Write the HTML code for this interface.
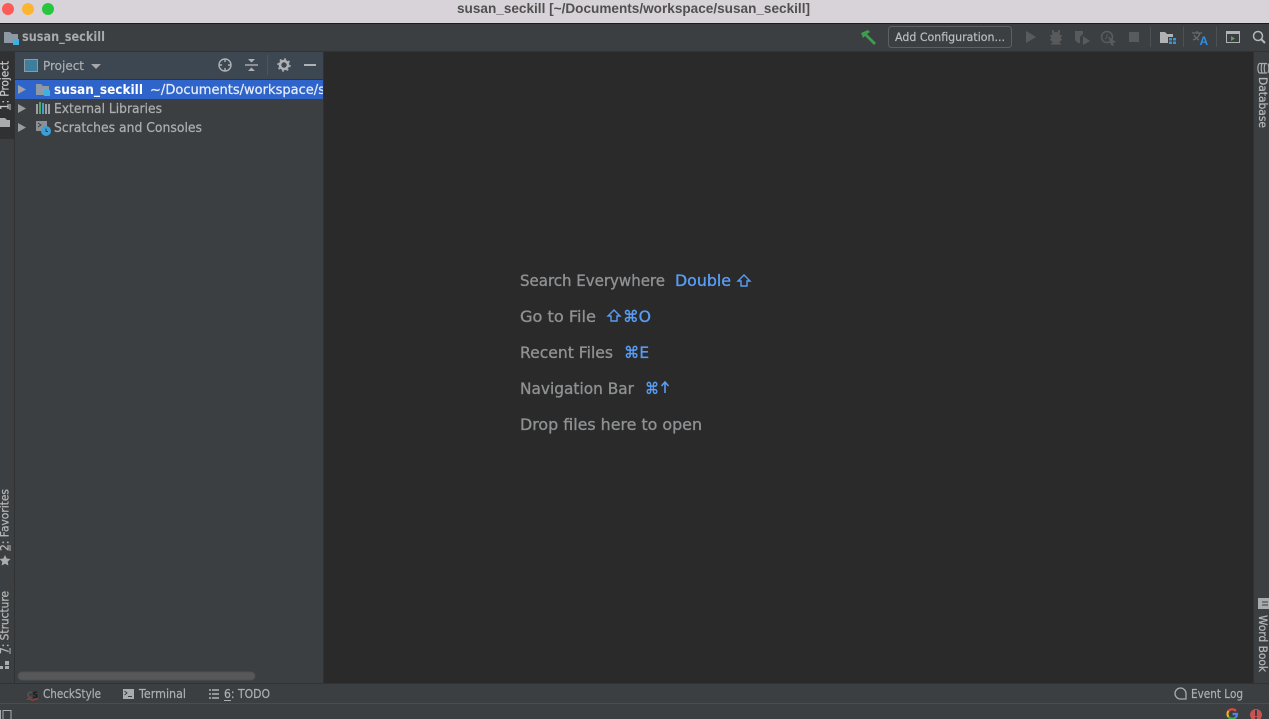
<!DOCTYPE html>
<html><head><meta charset="utf-8"><title>susan_seckill</title>
<style>
html,body{margin:0;padding:0;width:1269px;height:719px;overflow:hidden;background:#3c3f41}
svg{display:block}
text{font-family:"DejaVu Sans","Liberation Sans",sans-serif;font-size:12.5px;fill:#b4b6b8}
.t{font-size:12.5px;fill:#adafb1;stroke:#adafb1;stroke-width:.2px}
.w{font-size:16px;fill:#8f9193;stroke:#8f9193;stroke-width:.35px}
.k{font-size:16px;fill:#589df6;stroke:#589df6;stroke-width:.35px}
.v{font-size:11.5px;fill:#b4b6b8;stroke:#b4b6b8;stroke-width:.25px}
</style></head><body>
<svg width="1269" height="719" viewBox="0 0 1269 719" xmlns="http://www.w3.org/2000/svg">
<!-- title bar -->
<rect width="1269" height="23" fill="#d8d3d8"/>
<rect y="23" width="1269" height="1" fill="#1c1c1c"/>
<circle cx="8" cy="9" r="6" fill="#fc5b57"/><circle cx="28" cy="9" r="6" fill="#fdb52f"/><circle cx="48" cy="9" r="6" fill="#27c63f"/>
<text x="457" y="13" textLength="353" lengthAdjust="spacingAndGlyphs" style="font-family:'Liberation Sans',sans-serif;font-size:14px;font-weight:bold;fill:#505050">susan_seckill [~/Documents/workspace/susan_seckill]</text>
<!-- nav bar -->
<rect y="24" width="1269" height="27" fill="#3c3f41"/>
<rect y="51" width="1269" height="1" fill="#323232"/>
<path d="M4 32h6l2 2h6v9H4z" fill="#8d9aa6"/><rect x="13" y="39" width="6" height="6" fill="#3eb1e3"/>
<text x="22" y="41" textLength="83" lengthAdjust="spacingAndGlyphs" style="font-size:13px;font-weight:bold;fill:#a8aaac">susan_seckill</text>
<!-- hammer -->
<path d="M861 33l7-3 2 2-3 2 9 9-2 2-9-9-2 2z" fill="#3f9b4f"/>
<!-- config button -->
<rect x="888.500" y="26.500" width="123" height="21" rx="3" fill="#3c3f41" stroke="#5e6060"/>
<text x="895" y="41" textLength="110" lengthAdjust="spacingAndGlyphs" style="font-size:11.500px;fill:#bbbdbf;stroke:#bbbdbf;stroke-width:.2px">Add Configuration...</text>
<!-- disabled run icons -->
<path d="M1026 31l10 6-10 6z" fill="#585a5c"/>
<g fill="#585a5c"><ellipse cx="1056" cy="38" rx="5" ry="6"/><rect x="1050" y="35" width="12" height="1.500"/><rect x="1050" y="39" width="12" height="1.500"/><rect x="1051" y="43" width="10" height="1.500"/><rect x="1052" y="30" width="2" height="3"/><rect x="1058" y="30" width="2" height="3"/></g>
<path d="M1075 31h8v3l-3 3v6h-2l-3-3z" fill="#585a5c"/><path d="M1083 36l7 5-7 4z" fill="#585a5c"/>
<circle cx="1107" cy="37" r="5.500" fill="none" stroke="#585a5c" stroke-width="1.600"/><path d="M1107 34v3l-2 2" stroke="#585a5c" fill="none"/><path d="M1108 36l8 6-3 1 1 3-3-1z" fill="#585a5c"/>
<rect x="1129" y="32" width="10" height="10" fill="#585a5c"/>
<rect x="1150" y="27" width="1" height="20" fill="#4e5052"/>
<path d="M1160 32h5l2 2h6v3h-5v6h-8z" fill="#b0b2b4"/><g fill="#3e93d1"><rect x="1169" y="38" width="3" height="2.500"/><rect x="1173" y="38" width="3" height="2.500"/><rect x="1169" y="41.500" width="3" height="2.500"/><rect x="1173" y="41.500" width="3" height="2.500"/></g>
<rect x="1183" y="27" width="1" height="20" fill="#4e5052"/>
<path d="M1192 33h10M1197 31v2M1200 33c-1 4-4 6-7 7M1194 35c1 2 3 4 5 5" stroke="#6a6c6e" stroke-width="1.300" fill="none"/>
<text x="1199.500" y="45" style="font-family:'Liberation Sans',sans-serif;font-size:12px;font-weight:bold;fill:#2f8de4">A</text>
<rect x="1216" y="27" width="1" height="20" fill="#4e5052"/>
<rect x="1226.500" y="31.500" width="13" height="11" fill="none" stroke="#b0b2b4"/><rect x="1226" y="31" width="14" height="3" fill="#b0b2b4"/><path d="M1231 36l4 2.500-4 2.500z" fill="#5fa05f"/>
<circle cx="1258" cy="36" r="4.500" fill="none" stroke="#b4b6b8" stroke-width="1.500"/><path d="M1261 39l4 4" stroke="#b4b6b8" stroke-width="2"/>
<!-- left stripe -->
<rect y="52" width="15" height="631" fill="#3c3f41"/>
<rect y="52" width="14" height="87" fill="#2f3133"/>
<rect x="14" y="52" width="1" height="631" fill="#323232"/>
<text transform="translate(8.500,110) rotate(-90)" textLength="49" lengthAdjust="spacingAndGlyphs" style="font-size:11.500px;fill:#c4c6c8;stroke:#c4c6c8;stroke-width:.25px">1: Project</text>
<rect x="9.500" y="104" width="1" height="6" fill="#c4c6c8"/>
<path d="M0 118h5l2 2h3v7H0z" fill="#a9abad"/>
<text transform="translate(8.500,551) rotate(-90)" textLength="62" lengthAdjust="spacingAndGlyphs" class="v">2: Favorites</text>
<rect x="9.500" y="545" width="1" height="6" fill="#b4b6b8"/>
<path d="M5 555l1.700 3.500 3.800.5-2.800 2.700.7 3.800-3.400-1.800-3.400 1.800.7-3.800L-.5 559l3.800-.5z" fill="#a9abad"/>
<text transform="translate(8.500,654) rotate(-90)" textLength="63" lengthAdjust="spacingAndGlyphs" class="v">7: Structure</text>
<rect x="9.500" y="648" width="1" height="6" fill="#b4b6b8"/>
<g fill="#a9abad"><rect x="5" y="661" width="4" height="4"/><rect x="0" y="666" width="3" height="3"/><rect x="5" y="666" width="4" height="3"/></g>
<!-- project panel -->
<rect x="15" y="52" width="308" height="631" fill="#3c3f41"/>
<rect x="15" y="52" width="308" height="27" fill="#3d4752"/>
<rect x="15" y="79" width="308" height="1" fill="#323232"/>
<rect x="24.500" y="59.500" width="13" height="12" fill="#3f7d9c" stroke="#8e99a3"/>
<text x="43" y="70" textLength="41" lengthAdjust="spacingAndGlyphs" class="t">Project</text>
<path d="M91 64h10l-5 5z" fill="#a5a8ab"/>
<circle cx="225" cy="65" r="6" fill="none" stroke="#afb1b3" stroke-width="1.400"/><path d="M225 59v3M225 68v3M219 65h3M228 65h3" stroke="#afb1b3" stroke-width="1.400"/>
<path d="M245 65h13" stroke="#afb1b3" stroke-width="1.400"/><path d="M248 59h7l-3.500 3.500zM248 71h7l-3.500-3.500z" fill="#afb1b3"/>
<rect x="267" y="55" width="1" height="20" fill="#4c5560"/>
<circle cx="284" cy="65" r="4" fill="none" stroke="#afb1b3" stroke-width="2.600"/><circle cx="284" cy="65" r="6" fill="none" stroke="#afb1b3" stroke-width="1.400" stroke-dasharray="2 2.700"/>
<rect x="304" y="64" width="12" height="2" fill="#afb1b3"/>
<!-- tree -->
<rect x="15" y="80" width="308" height="19" fill="#2f65ca"/>
<path d="M18 85l8 4.500-8 4.500z" fill="#a0a3a6"/>
<path d="M36 84h5l2 2h6v9H36z" fill="#8d9aa6"/><rect x="44" y="90" width="6" height="6" fill="#3eb1e3"/>
<svg x="15" y="80" width="308" height="19"><text x="39" y="14" textLength="89" lengthAdjust="spacingAndGlyphs" style="font-size:13px;font-weight:bold;fill:#fff">susan_seckill</text><text x="135" y="14" textLength="175" lengthAdjust="spacingAndGlyphs" style="font-size:13px;fill:#e6ecf8;stroke:#e6ecf8;stroke-width:.25px">~/Documents/workspace/s</text></svg>
<path d="M18 104l8 4.500-8 4.500z" fill="#9a9c9e"/>
<g><rect x="36" y="104" width="2" height="10" fill="#9aa0a6"/><rect x="39" y="102" width="2" height="12" fill="#57a65a"/><rect x="42" y="103" width="2" height="11" fill="#3f9fd4"/><rect x="45" y="104" width="2" height="10" fill="#9aa0a6"/><rect x="48" y="104" width="2" height="10" fill="#9aa0a6"/></g>
<text x="54" y="113" textLength="108" lengthAdjust="spacingAndGlyphs" style="font-size:13px;fill:#acaeb0;stroke:#acaeb0;stroke-width:.25px">External Libraries</text>
<path d="M18 123l8 4.500-8 4.500z" fill="#9a9c9e"/>
<path d="M36 121h11v10H36z" fill="#8d9094"/><path d="M38 123l3 2-3 2" stroke="#3c3f41" fill="none"/>
<circle cx="46" cy="131" r="5" fill="#3aa0d8"/><path d="M46 128.500v3h2" stroke="#2c3e50" fill="none"/>
<text x="54" y="132" textLength="148" lengthAdjust="spacingAndGlyphs" style="font-size:13px;fill:#acaeb0;stroke:#acaeb0;stroke-width:.25px">Scratches and Consoles</text>
<!-- h scrollbar -->
<rect x="18" y="672" width="237" height="8" rx="4" fill="#565859" stroke="#4e5052"/>
<!-- editor -->
<rect x="323" y="52" width="1" height="631" fill="#323232"/>
<rect x="324" y="52" width="930" height="631" fill="#2a2a2a"/>
<text x="520" y="286" textLength="145" lengthAdjust="spacingAndGlyphs" class="w">Search Everywhere</text>
<text x="675" y="286" textLength="56" lengthAdjust="spacingAndGlyphs" class="k">Double</text>
<path d="M744 275l6 6h-3v5h-6v-5h-3z" fill="none" stroke="#589df6" stroke-width="1.400"/>
<text x="520" y="322" textLength="76" lengthAdjust="spacingAndGlyphs" class="w">Go to File</text>
<path d="M614 310l6 6h-3v5h-6v-5h-3z" fill="none" stroke="#589df6" stroke-width="1.400"/>
<text x="623" y="322" textLength="28" lengthAdjust="spacingAndGlyphs" class="k">⌘O</text>
<text x="520" y="358" textLength="93" lengthAdjust="spacingAndGlyphs" class="w">Recent Files</text>
<text x="624" y="358" textLength="25" lengthAdjust="spacingAndGlyphs" class="k">⌘E</text>
<text x="520" y="394" textLength="114" lengthAdjust="spacingAndGlyphs" class="w">Navigation Bar</text>
<text x="645" y="394" textLength="14" lengthAdjust="spacingAndGlyphs" class="k">⌘</text>
<path d="M665 393v-10M661.500 386l3.500-4 3.500 4" fill="none" stroke="#589df6" stroke-width="1.600"/>
<text x="520" y="430" textLength="182" lengthAdjust="spacingAndGlyphs" class="w">Drop files here to open</text>
<!-- right stripe -->
<rect x="1253" y="52" width="1" height="631" fill="#323232"/>
<rect x="1254" y="52" width="15" height="631" fill="#3c3f41"/>
<g fill="none" stroke="#a9abad" stroke-width="1.200"><path d="M1259 63.500h8M1259 73h8M1259 63.500c-1.500 3-1.500 6.500 0 9.500M1262 63.500c-1 3-1 6.500 0 9.500M1265 63.500c-1 3-1 6.500 0 9.500M1268 63.500c1 3 1 6.500 0 9.500"/></g>
<text transform="translate(1259,77) rotate(90)" textLength="51" lengthAdjust="spacingAndGlyphs" class="v">Database</text>
<path d="M1258 598h11v11h-11z" fill="#a9abad"/><path d="M1262 602h6M1262 605h6" stroke="#3c3f41"/>
<text transform="translate(1259,615) rotate(90)" textLength="57" lengthAdjust="spacingAndGlyphs" class="v">Word Book</text>
<!-- bottom tool bar -->
<rect y="683" width="1269" height="1" fill="#323232"/>
<rect y="684" width="1269" height="19" fill="#3c3f41"/>
<rect y="703" width="1269" height="1" fill="#4a4c4e"/>
<text x="27" y="698" textLength="11" lengthAdjust="spacingAndGlyphs" style="font-size:9px;font-weight:bold;fill:#1b1b1b"><tspan fill="#555">C</tspan>S</text>
<path d="M27 699.500q2-1.500 4 0t4 0t3 0" stroke="#c83a32" fill="none"/>
<text x="43" y="698" textLength="58" lengthAdjust="spacingAndGlyphs" class="t" style="font-size:12px">CheckStyle</text>
<rect x="123" y="689" width="11" height="10" fill="#a9abad"/><path d="M124.500 691l2.500 2-2.500 2M128 696.500h4" stroke="#3c3f41" fill="none"/>
<text x="139" y="698" textLength="47" lengthAdjust="spacingAndGlyphs" class="t" style="font-size:12px">Terminal</text>
<path d="M212 690h7M212 694h7M212 698h7M209 690h2M209 694h2M209 698h2" stroke="#afb1b3" stroke-width="1.500"/>
<text x="224" y="698" textLength="46" lengthAdjust="spacingAndGlyphs" class="t" style="font-size:12px">6: TODO</text>
<rect x="224" y="700" width="7" height="1" fill="#adafb1"/>
<path d="M1183 699h-2a5.500 5.500 0 1 1 6-5.500v5.500z" transform="translate(-1 0)" fill="none" stroke="#a9abad" stroke-width="1.300"/>
<text x="1191" y="698" textLength="52" lengthAdjust="spacingAndGlyphs" class="t" style="font-size:12px">Event Log</text>
<!-- status bar -->
<rect y="704" width="1269" height="15" fill="#3c3f41"/>
<rect x="3" y="710.500" width="8" height="9" fill="none" stroke="#a9abad"/><rect x="0" y="710" width="1" height="9" fill="#a9abad"/>
<g fill="none" stroke-width="2.200"><path d="M1236 711a5 5 0 0 0-7.500 0" stroke="#e5483c"/><path d="M1228.500 711a5 5 0 0 0 0 6" stroke="#f2b90f"/><path d="M1228.500 717a5 5 0 0 0 7 .5" stroke="#37a651"/><path d="M1235.500 717.500a5 5 0 0 0 1.500-3.500h-4.500" stroke="#4a85ec"/></g>
<circle cx="1256" cy="715" r="6" fill="#c75450"/><rect x="1255" y="710" width="2" height="6" fill="#3c3f41"/><rect x="1255" y="717" width="2" height="2" fill="#3c3f41"/>
</svg>
</body></html>
